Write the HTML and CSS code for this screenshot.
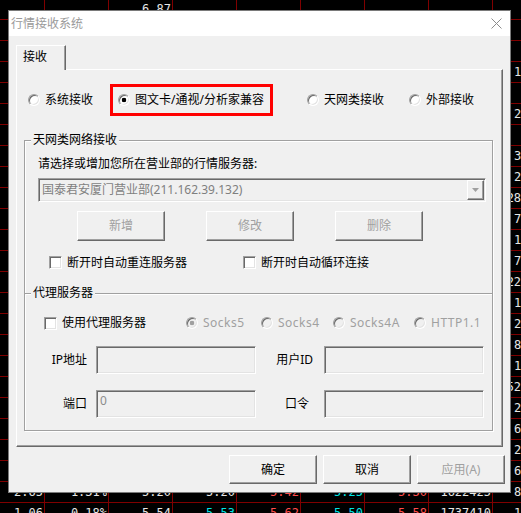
FILE: index.html
```html
<!DOCTYPE html>
<html lang="zh-CN">
<head>
  <meta charset="UTF-8">
  <meta name="viewport" content="width=device-width, initial-scale=1.0">
  <title>行情接收系统</title>
  <link rel="stylesheet" href="styles.css">
</head>
<body>

  <!-- 行情列表 (对话框后面) -->
  <div class="quotes" id="quotes"></div>

  <div class="dialog">
    <div class="titlebar">
      <span class="title">行情接收系统</span>
      <svg class="close" width="11" height="11" viewBox="0 0 11 11">
        <path d="M0.5 0.5 L10.5 10.5 M10.5 0.5 L0.5 10.5" stroke="#8c8c8c" stroke-width="1" fill="none"/>
      </svg>
    </div>

    <div class="dialog-body">
      <div class="tabs">
        <div class="tab">接收</div>
      </div>

      <div class="pane">
        <div class="source-row">
          <label class="opt opt-sys"><span class="radio"></span>系统接收</label>
          <label class="opt opt-card"><span class="radio checked"></span>图文卡/通视/分析家兼容</label>
          <label class="opt opt-net"><span class="radio"></span>天网类接收</label>
          <label class="opt"><span class="radio"></span>外部接收</label>
        </div>

        <div class="group">
          <div class="section net">
            <div class="legend">天网类网络接收</div>
            <div class="hint">请选择或增加您所在营业部的行情服务器:</div>
            <div class="combo">
              <span class="combo-text">国泰君安厦门营业部(211.162.39.132)</span>
              <span class="combo-btn">
                <svg width="7" height="4" viewBox="0 0 7 4"><path d="M0 0 H7 L3.5 4 Z" fill="#a0a0a0"/></svg>
              </span>
            </div>
            <div class="server-btns">
              <button class="btn disabled">新增</button>
              <button class="btn disabled">修改</button>
              <button class="btn disabled">删除</button>
            </div>
            <div class="check-row">
              <label class="chk chk-wide"><span class="check"></span>断开时自动重连服务器</label>
              <label class="chk"><span class="check"></span>断开时自动循环连接</label>
            </div>
          </div>

          <div class="section proxy">
            <div class="legend">代理服务器</div>
            <div class="proxy-row">
              <label class="chk chk-proxy"><span class="check"></span>使用代理服务器</label>
              <label class="opt off w-s5"><span class="radio checked"></span>Socks5</label>
              <label class="opt off w-s4"><span class="radio"></span>Socks4</label>
              <label class="opt off w-s4a"><span class="radio"></span>Socks4A</label>
              <label class="opt off"><span class="radio"></span>HTTP1.1</label>
            </div>
            <div class="field-row">
              <span class="field-label">IP地址</span>
              <span class="field"></span>
              <span class="field-label r">用户ID</span>
              <span class="field"></span>
            </div>
            <div class="field-row">
              <span class="field-label">端口</span>
              <span class="field">0</span>
              <span class="field-label pw">口令</span>
              <span class="field"></span>
            </div>
          </div>
        </div>
      </div>

      <div class="footer">
        <button class="btn">确定</button>
        <button class="btn">取消</button>
        <button class="btn disabled">应用(A)</button>
      </div>
    </div>
  </div>

  <script>
    // 背景里的行情表, 大部分被对话框挡住
    function up(t) { return { t: t, c: 'up' }; }
    function down(t) { return { t: t, c: 'down' }; }

    var rows = [];
    for (var i = 0; i < 25; i++) {
      rows.push(['', '', '', '', '', '', '', '', '']);
    }
    rows[0][2] = '6.87';

    var lastCol = ['', '', '18342', '', '26571', '', '35620', '21436', '281540', '73215',
      '12876', '70431', '224613', '15023', '26718', '82540', '13362', '521870',
      '24105', '60217', '23948', '65102'];
    lastCol.forEach(function (v, i) { rows[i + 1][8] = v; });

    rows[23] = ['2.65', '1.31%', '5.20', '5.20', up('5.42'), down('5.25'), up('5.30'), '1622425', '81234'];
    rows[24] = ['1.06', '0.18%', '5.54', down('5.53'), up('5.62'), down('5.50'), up('5.58'), '1737410', '12045'];

    var box = document.getElementById('quotes');
    rows.forEach(function (row) {
      var r = document.createElement('div');
      r.className = 'q-row';
      row.forEach(function (cell) {
        var c = document.createElement('span');
        c.className = 'q-cell';
        if (typeof cell === 'object') {
          c.className += ' ' + cell.c;
          c.textContent = cell.t;
        } else {
          c.textContent = cell;
        }
        r.appendChild(c);
      });
      box.appendChild(r);
    });
  </script>

</body>
</html>
```

FILE: styles.css
```css
/* Reset */
* {
  margin: 0;
  padding: 0;
  box-sizing: border-box;
}

body {
  background: #000;
  height: 513px;
  overflow: hidden;
  position: relative;
  font-family: "Noto Sans", "Noto Sans CJK SC", sans-serif;
  font-size: 12px;
  color: #000;
}

/* 行情表格 */
.quotes {
  margin-top: -1px;
  font-family: "DejaVu Sans Mono", monospace;
  font-size: 12px;
  color: #e6e6e6;
}

.q-row {
  display: grid;
  grid-template-columns: 45px repeat(8, 64px);
  height: 21px;
  border-bottom: 1px solid #800000;
}

.q-cell {
  border-right: 1px solid #800000;
  text-align: right;
  padding-right: 1px;
  line-height: 20px;
  white-space: nowrap;
}

.q-cell:last-child {
  padding-right: 6px;
}

.q-cell.up {
  color: #ff4d4d;
}

.q-cell.down {
  color: #00e5e5;
}

/* 对话框 */
.dialog {
  position: absolute;
  left: 8px;
  top: 10px;
  width: 503px;
  height: 483px;
  background: #f0f0f0;
  border: 1px solid #7a7a7a;
}

.titlebar {
  height: 25px;
  background: #fff;
  display: flex;
  align-items: center;
  justify-content: space-between;
  padding: 0 8px 0 2px;
}

.title {
  color: #9a9a9a;
  line-height: 14px;
}

.close {
  display: block;
}

.dialog-body {
  padding: 9px 7px 0 7px;
}

.tabs {
  height: 24px;
  display: flex;
}

.tab {
  position: relative;
  z-index: 1;
  width: 50px;
  height: 25px;
  background: #f0f0f0;
  border-top: 1px solid #fff;
  border-left: 1px solid #fff;
  border-right: 1px solid #696969;
  box-shadow: inset -1px 0 #a0a0a0;
  padding: 4px 0 0 6px;
  line-height: 14px;
}

.pane {
  width: 487px;
  height: 378px;
  border: 1px solid;
  border-color: #fff #696969 #696969 #fff;
  box-shadow: inset -1px -1px #a0a0a0;
}

/* 单选 / 复选 */
.opt,
.chk {
  display: flex;
  align-items: center;
  gap: 5px;
  line-height: 14px;
  white-space: nowrap;
}

.radio {
  flex: none;
  width: 12px;
  height: 12px;
  border-radius: 50%;
  border: 1px solid;
  border-color: #a0a0a0 #fff #fff #a0a0a0;
  box-shadow: inset 1px 1px #696969, inset -1px -1px #e3e3e3;
  background: #fff;
}

.radio.checked {
  background: radial-gradient(circle, #000 0 2px, #fff 2.6px);
}

.check {
  flex: none;
  width: 13px;
  height: 13px;
  border: 1px solid;
  border-color: #a0a0a0 #fff #fff #a0a0a0;
  box-shadow: inset 1px 1px #696969, inset -1px -1px #e3e3e3;
  background: #fff;
}

.off {
  color: #a0a0a0;
  letter-spacing: 0.5px;
}

.off .radio {
  background: #f0f0f0;
}

.off .radio.checked {
  background: radial-gradient(circle, #a0a0a0 0 2px, #f0f0f0 2.6px);
}

.source-row {
  display: flex;
  align-items: center;
  height: 32px;
  margin-top: 14px;
}

.opt-sys {
  width: 82px;
  margin-left: 11px;
}

/* 红框标注 */
.opt-card {
  width: 163px;
  height: 32px;
  border: 3px solid #f00;
  padding-left: 5px;
}

.opt-net {
  width: 102px;
  margin-left: 34px;
}

/* 分组框 */
.group {
  width: 469px;
  margin: 24px 0 0 7px;
  border: 1px solid #a0a0a0;
  box-shadow: inset 1px 1px #fff, 1px 1px #fff;
}

.section {
  display: flex;
  flex-direction: column;
}

.section.net {
  height: 152px;
}

.section.proxy {
  border-top: 1px solid #a0a0a0;
  box-shadow: inset 0 1px #fff;
  padding-bottom: 12px;
}

.legend {
  align-self: flex-start;
  margin: -8px 0 0 6px;
  padding: 0 2px;
  background: #f0f0f0;
  line-height: 14px;
}

.hint {
  margin: 10px 0 0 13px;
  line-height: 14px;
}

.combo {
  width: 448px;
  height: 24px;
  margin: 7px 0 0 13px;
  display: flex;
  align-items: center;
  justify-content: space-between;
  padding: 0 1px 0 3px;
  border: 1px solid;
  border-color: #a0a0a0 #fff #fff #a0a0a0;
  box-shadow: inset 1px 1px #696969, inset -1px -1px #e3e3e3;
  color: #7f7f7f;
  line-height: 14px;
}

.combo-btn {
  width: 17px;
  height: 20px;
  display: flex;
  align-items: center;
  justify-content: center;
  border: 1px solid;
  border-color: #fff #696969 #696969 #fff;
  box-shadow: inset -1px -1px #a0a0a0;
}

.combo-btn svg {
  display: block;
}

/* 按钮 */
.btn {
  width: 88px;
  height: 30px;
  font: inherit;
  color: #000;
  background: #f0f0f0;
  border: 1px solid;
  border-color: #fff #696969 #696969 #fff;
  box-shadow: inset -1px -1px #a0a0a0;
  line-height: 14px;
}

.btn.disabled {
  color: #a0a0a0;
}

.server-btns {
  display: flex;
  gap: 41px;
  margin: 9px 0 0 52px;
}

.check-row {
  display: flex;
  align-items: center;
  height: 13px;
  margin: 15px 0 0 24px;
}

.chk-wide {
  width: 194px;
}

/* 代理 */
.proxy-row {
  display: flex;
  align-items: center;
  height: 14px;
  margin: 16px 0 0 19px;
}

.chk-proxy {
  width: 142px;
}

.w-s5 {
  width: 75px;
}

.w-s4 {
  width: 72px;
}

.w-s4a {
  width: 81px;
}

.field-row {
  display: grid;
  grid-template-columns: 71px 160px 68px 160px;
  align-items: center;
  height: 28px;
  margin-top: 16px;
}

.field-label {
  text-align: right;
  padding-right: 9px;
  line-height: 14px;
}

.field-label.r {
  padding-right: 11px;
}

.field-label.pw {
  padding-right: 15px;
}

.field {
  height: 28px;
  padding: 3px 3px;
  border: 1px solid;
  border-color: #a0a0a0 #fff #fff #a0a0a0;
  box-shadow: inset 1px 1px #696969, inset -1px -1px #e3e3e3;
  background: #f0f0f0;
  color: #8c8c8c;
  line-height: 14px;
}

.footer {
  display: flex;
  justify-content: flex-end;
  gap: 6px;
  margin: 8px -2px 0 0;
}

.footer .btn {
  height: 29px;
}
```
